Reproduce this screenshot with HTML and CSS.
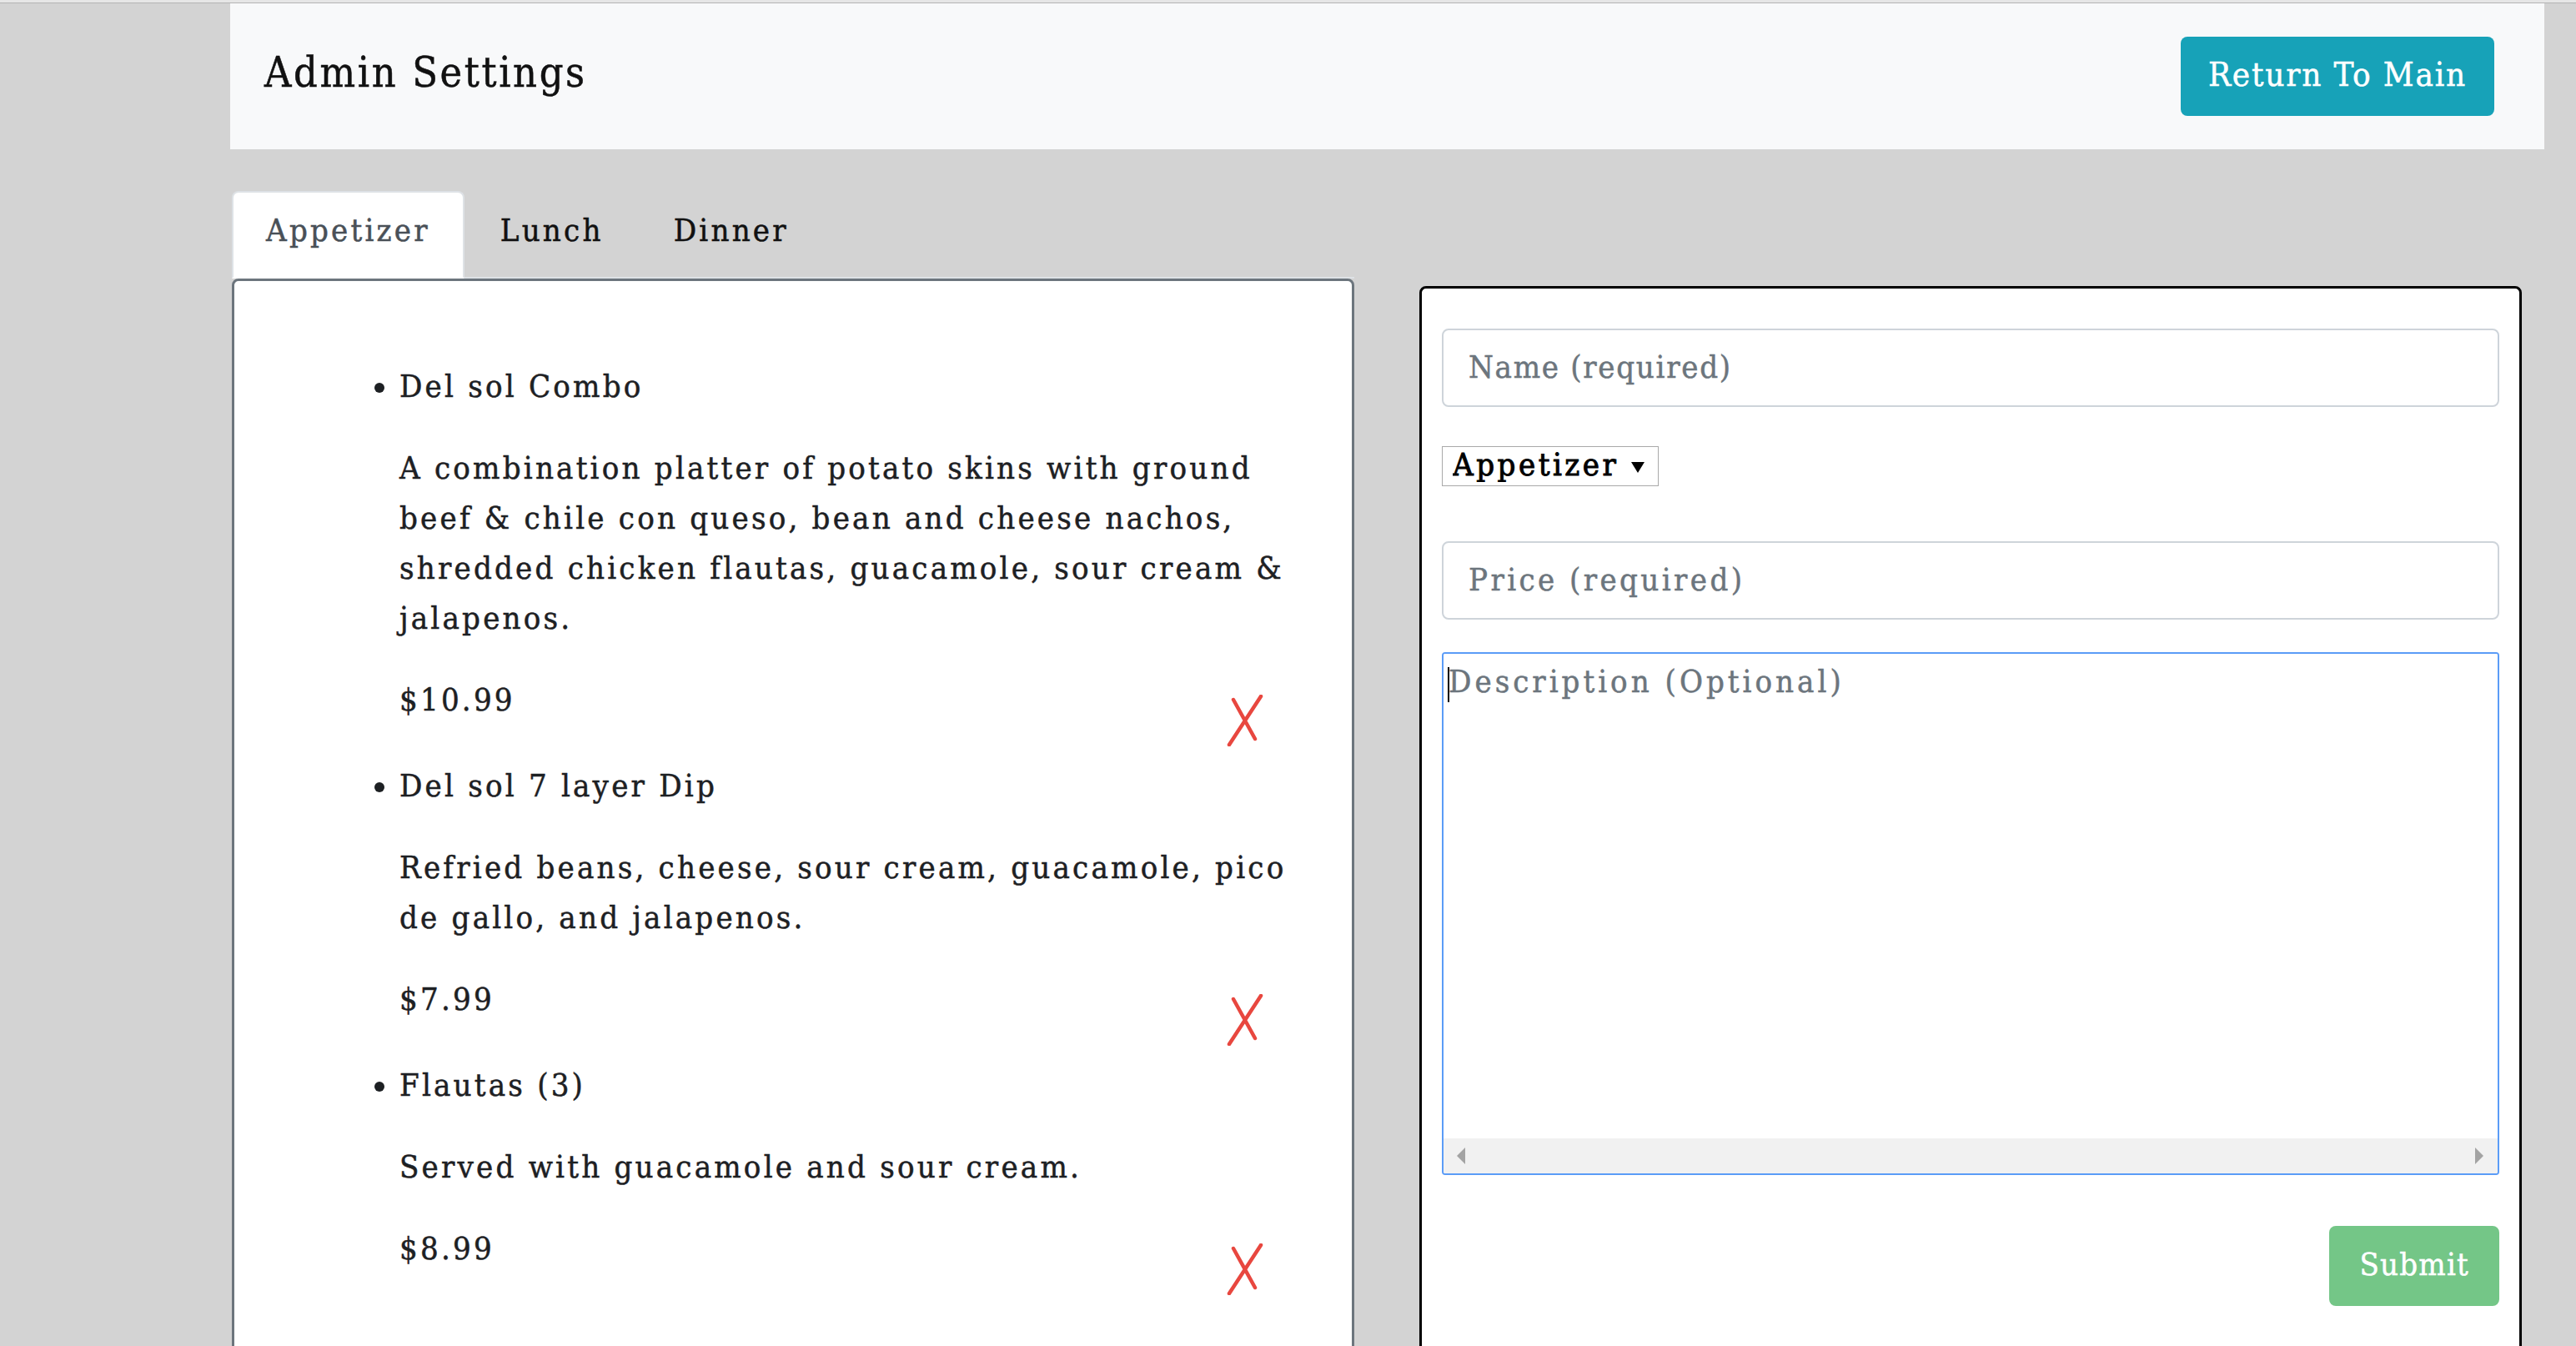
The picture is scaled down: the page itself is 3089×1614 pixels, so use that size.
FILE: index.html
```html
<!DOCTYPE html>
<html lang="en">
<head>
<meta charset="utf-8">
<title>Admin Settings</title>
<link rel="stylesheet" href="styles.css">
</head>
<body>
<div class="topline"></div>
<div class="page">
  <header class="header">
    <h1 class="title">Admin Settings</h1>
    <button class="btn-return" type="button">Return To Main</button>
  </header>
  <div class="main">
    <section class="menu-col">
      <nav class="tabs">
        <a class="tab active">Appetizer</a>
        <a class="tab">Lunch</a>
        <a class="tab">Dinner</a>
      </nav>
      <div class="list-panel">
        <ul class="items">
          <li class="item">
            <div class="item-name">Del sol Combo</div>
            <p class="item-desc">A combination platter of potato skins with ground beef &amp; chile con queso, bean and cheese nachos, shredded chicken flautas, guacamole, sour cream &amp; jalapenos.</p>
            <div class="price-row">
              <span class="price">$10.99</span>
              <button class="del" type="button" aria-label="Delete"><svg class="x-icon" viewBox="0 0 44 62" width="44" height="62"><path d="M8 6 L34 53 M41 2 L3 60" stroke="#e8473f" stroke-width="4.5" stroke-linecap="round" fill="none"/></svg></button>
            </div>
          </li>
          <li class="item">
            <div class="item-name">Del sol 7 layer Dip</div>
            <p class="item-desc">Refried beans, cheese, sour cream, guacamole, pico de gallo, and jalapenos.</p>
            <div class="price-row">
              <span class="price">$7.99</span>
              <button class="del" type="button" aria-label="Delete"><svg class="x-icon" viewBox="0 0 44 62" width="44" height="62"><path d="M8 6 L34 53 M41 2 L3 60" stroke="#e8473f" stroke-width="4.5" stroke-linecap="round" fill="none"/></svg></button>
            </div>
          </li>
          <li class="item">
            <div class="item-name">Flautas (3)</div>
            <p class="item-desc">Served with guacamole and sour cream.</p>
            <div class="price-row">
              <span class="price">$8.99</span>
              <button class="del" type="button" aria-label="Delete"><svg class="x-icon" viewBox="0 0 44 62" width="44" height="62"><path d="M8 6 L34 53 M41 2 L3 60" stroke="#e8473f" stroke-width="4.5" stroke-linecap="round" fill="none"/></svg></button>
            </div>
          </li>
        </ul>
      </div>
    </section>
    <section class="form-col">
      <form class="form-panel">
        <input class="field field-name" type="text" placeholder="Name (required)">
        <div class="select-wrap">
          <select class="category">
            <option>Appetizer</option>
            <option>Lunch</option>
            <option>Dinner</option>
          </select>
        </div>
        <input class="field field-price" type="text" placeholder="Price (required)">
        <div class="desc-box">
          <textarea class="desc-input" placeholder="Description (Optional)"></textarea>
          <span class="caret"></span>
          <div class="hscroll">
            <span class="arrow-left"></span>
            <span class="arrow-right"></span>
          </div>
        </div>
        <div class="form-actions">
          <button class="btn-submit" type="button">Submit</button>
        </div>
      </form>
    </section>
  </div>
</div>
</body>
</html>
```
FILE: styles.css
```css
html, body {
  margin: 0;
  padding: 0;
}
body {
  background: #d3d3d3;
  font-family: "DejaVu Serif Condensed", "DejaVu Serif", "Liberation Serif", serif;
  font-stretch: condensed;
  font-size: 38px;
  letter-spacing: 3.2px;
  color: #1d2023;
  -webkit-text-stroke: 0.5px currentColor;
  overflow: hidden;
}
.topline {
  height: 4px;
  background: linear-gradient(#e6e6e6 0, #e6e6e6 3px, #b4b4b4 3px);
}
.page {
  padding: 0 38px 0 276px;
}
.header {
  height: 175px;
  background: #f8f9fa;
  display: flex;
  align-items: center;
  justify-content: space-between;
  padding: 0 60px 0 41px;
  box-sizing: border-box;
}
.title {
  margin: 0 0 10px;
  font-size: 50px;
  font-weight: normal;
  letter-spacing: 2.6px;
  color: #111;
  line-height: 1;
}
.btn-return {
  height: 95px;
  padding: 0 33px 6px;
  border: none;
  border-radius: 8px;
  background: #17a2b8;
  color: #fff;
  font: inherit;
  font-size: 40px;
  letter-spacing: 1.8px;
  -webkit-text-stroke: inherit;
  cursor: pointer;
}
.main {
  display: flex;
  align-items: flex-start;
  gap: 78px;
  margin-top: 50px;
  padding: 0 27px 0 2px;
}
.menu-col {
  width: 1346px;
  flex: none;
}
.tabs {
  display: flex;
  gap: 2px;
  border-bottom: 2px solid #dee2e6;
}
.tab {
  padding: 14px 39px 24px;
  line-height: 63px;
  border: 2px solid transparent;
  border-radius: 8px 8px 0 0;
  margin-bottom: -2px;
  color: #111;
}
.tab.active {
  background: #fff;
  border-color: #dee2e6 #dee2e6 #fff;
  color: #495057;
}
.list-panel {
  background: #fff;
  border: 3px solid #6c757d;
  border-radius: 8px;
  padding: 96px 67px 140px 118px;
}
.items {
  margin: 0;
  padding-left: 80px;
  list-style: disc;
}
.item + .item {
  margin-top: 17px;
}
.item-name {
  line-height: 60px;
}
.item-desc {
  margin: 38px 0 0;
  line-height: 60px;
}
.price-row {
  margin-top: 38px;
  display: flex;
  justify-content: space-between;
  align-items: flex-start;
}
.price {
  line-height: 60px;
}
.del {
  margin: 24px 39px 0 0;
  padding: 0;
  border: none;
  background: none;
  display: block;
  cursor: pointer;
}
.x-icon {
  display: block;
}
.form-col {
  flex: 1;
  margin-top: 114px;
}
.form-panel {
  background: #fff;
  border: 3px solid #000;
  border-radius: 8px;
  padding: 48px 24px 220px;
}
.field {
  display: block;
  width: 100%;
  height: 94px;
  box-sizing: border-box;
  border: 2px solid #ced4da;
  border-radius: 8px;
  padding: 0 30px 3px;
  font: inherit;
  letter-spacing: 1.7px;
  -webkit-text-stroke: inherit;
  color: #495057;
  background: #fff;
  outline: none;
}
.field-price {
  letter-spacing: 3.4px;
}
.field::placeholder,
.desc-input::placeholder {
  color: #6c757d;
  opacity: 1;
}
.select-wrap {
  position: relative;
  width: 260px;
  margin-top: 47px;
}
.category {
  -webkit-appearance: none;
  appearance: none;
  display: block;
  width: 100%;
  height: 48px;
  box-sizing: border-box;
  border: 1px solid #a9a9a9;
  border-radius: 0;
  background: #fff;
  padding: 0 0 4px 12px;
  font: inherit;
  letter-spacing: 3.5px;
  line-height: 42px;
  color: #000;
  -webkit-text-stroke: 0.9px #000;
  outline: none;
}
.select-wrap::after {
  content: "";
  position: absolute;
  right: 17px;
  top: 19px;
  border-left: 8px solid transparent;
  border-right: 8px solid transparent;
  border-top: 13px solid #000;
  pointer-events: none;
}
.field-price {
  margin-top: 66px;
}
.desc-box {
  position: relative;
  margin-top: 39px;
  height: 627px;
  box-sizing: border-box;
  border: 2px solid #5b9cf7;
  border-radius: 4px;
  display: flex;
  flex-direction: column;
  overflow: hidden;
}
.desc-input {
  flex: 1;
  border: none;
  outline: none;
  resize: none;
  overflow: hidden;
  padding: 3px 6px;
  margin: 0;
  font: inherit;
  letter-spacing: 4px;
  line-height: 60px;
  -webkit-text-stroke: inherit;
  color: #495057;
  background: #fff;
}
.caret {
  position: absolute;
  left: 5px;
  top: 16px;
  width: 2px;
  height: 42px;
  background: #000;
}
.hscroll {
  height: 42px;
  flex: none;
  background: #f1f1f1;
  display: flex;
  align-items: center;
  justify-content: space-between;
  padding: 0 17px 0 16px;
}
.arrow-left {
  width: 0;
  height: 0;
  border-top: 10px solid transparent;
  border-bottom: 10px solid transparent;
  border-right: 10px solid #a3a3a3;
}
.arrow-right {
  width: 0;
  height: 0;
  border-top: 10px solid transparent;
  border-bottom: 10px solid transparent;
  border-left: 10px solid #a3a3a3;
}
.form-actions {
  display: flex;
  justify-content: flex-end;
  margin-top: 61px;
}
.btn-submit {
  height: 96px;
  padding: 0 36px 4px;
  border: none;
  border-radius: 8px;
  background: #74c687;
  color: #fff;
  font: inherit;
  letter-spacing: 1.2px;
  -webkit-text-stroke: inherit;
  cursor: default;
}
```
